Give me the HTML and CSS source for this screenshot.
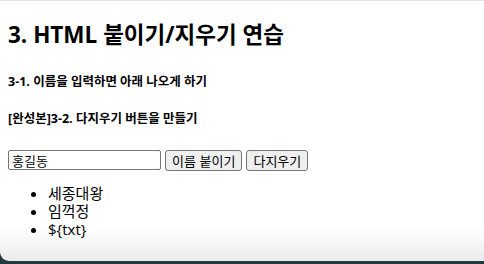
FILE: index.html
```html
<!DOCTYPE html>
<html lang="ko">
<head>
  <meta charset="UTF-8" />
  <title>HTML 붙이기/지우기 연습</title>
  <link rel="stylesheet" href="styles.css">
</head>
<body>
  <div class="page">
    <h1>3. HTML 붙이기/지우기 연습</h1>
    <h3>3-1. 이름을 입력하면 아래 나오게 하기</h3>
    <h3>[완성본]3-2. 다지우기 버튼을 만들기</h3>

    <div class="form-row">
      <input type="text" id="name-input" value="홍길동" />
      <button>이름 붙이기</button>
      <button>다지우기</button>
    </div>

    <ul id="name-list">
      <li>세종대왕</li>
      <li>임꺽정</li>
      <li>${txt}</li>
    </ul>
  </div>
</body>
</html>
```

FILE: styles.css
```css
html {
  background: #22383d;
  height: 100%;
}

body {
  margin: 0;
  height: 100%;
  font-family: "Open Sans", "Noto Sans CJK KR", sans-serif;
  color: #000;
}

.page {
  box-sizing: border-box;
  height: 261px;
  padding: 0 8px;
  border-top: 1px solid #e4e4e4;
  border-bottom-left-radius: 9px;
  background: linear-gradient(to bottom, #ffffff 0, #ffffff 226px, #ebebeb 100%);
  overflow: hidden;
}

h1 {
  font-size: 22.5px;
  font-weight: 700;
  margin: 17px 0 0;
  line-height: 34px;
}

h3 {
  font-size: 12.5px;
  font-weight: 700;
  margin: 22px 0 0;
  line-height: 16px;
}

h3 + h3 {
  margin-top: 21px;
}

.form-row {
  display: flex;
  gap: 4px;
  margin-top: 23px;
}

.form-row input {
  width: 153px;
  height: 20px;
  box-sizing: border-box;
  margin: 0;
  padding: 1px 3px;
  border: 1px solid #767676;
  border-radius: 2px;
  font-family: "Noto Sans CJK KR", sans-serif;
  font-size: 13px;
}

.form-row button {
  height: 21px;
  box-sizing: border-box;
  margin: 0;
  padding: 0 6px;
  border: 1px solid #767676;
  border-radius: 3px;
  background: #efefef;
  font-family: "Noto Sans CJK KR", sans-serif;
  font-size: 13px;
  line-height: 18px;
}

ul {
  margin: 13px 0 0;
  padding-left: 40px;
  font-size: 15px;
  line-height: 18px;
}
```
